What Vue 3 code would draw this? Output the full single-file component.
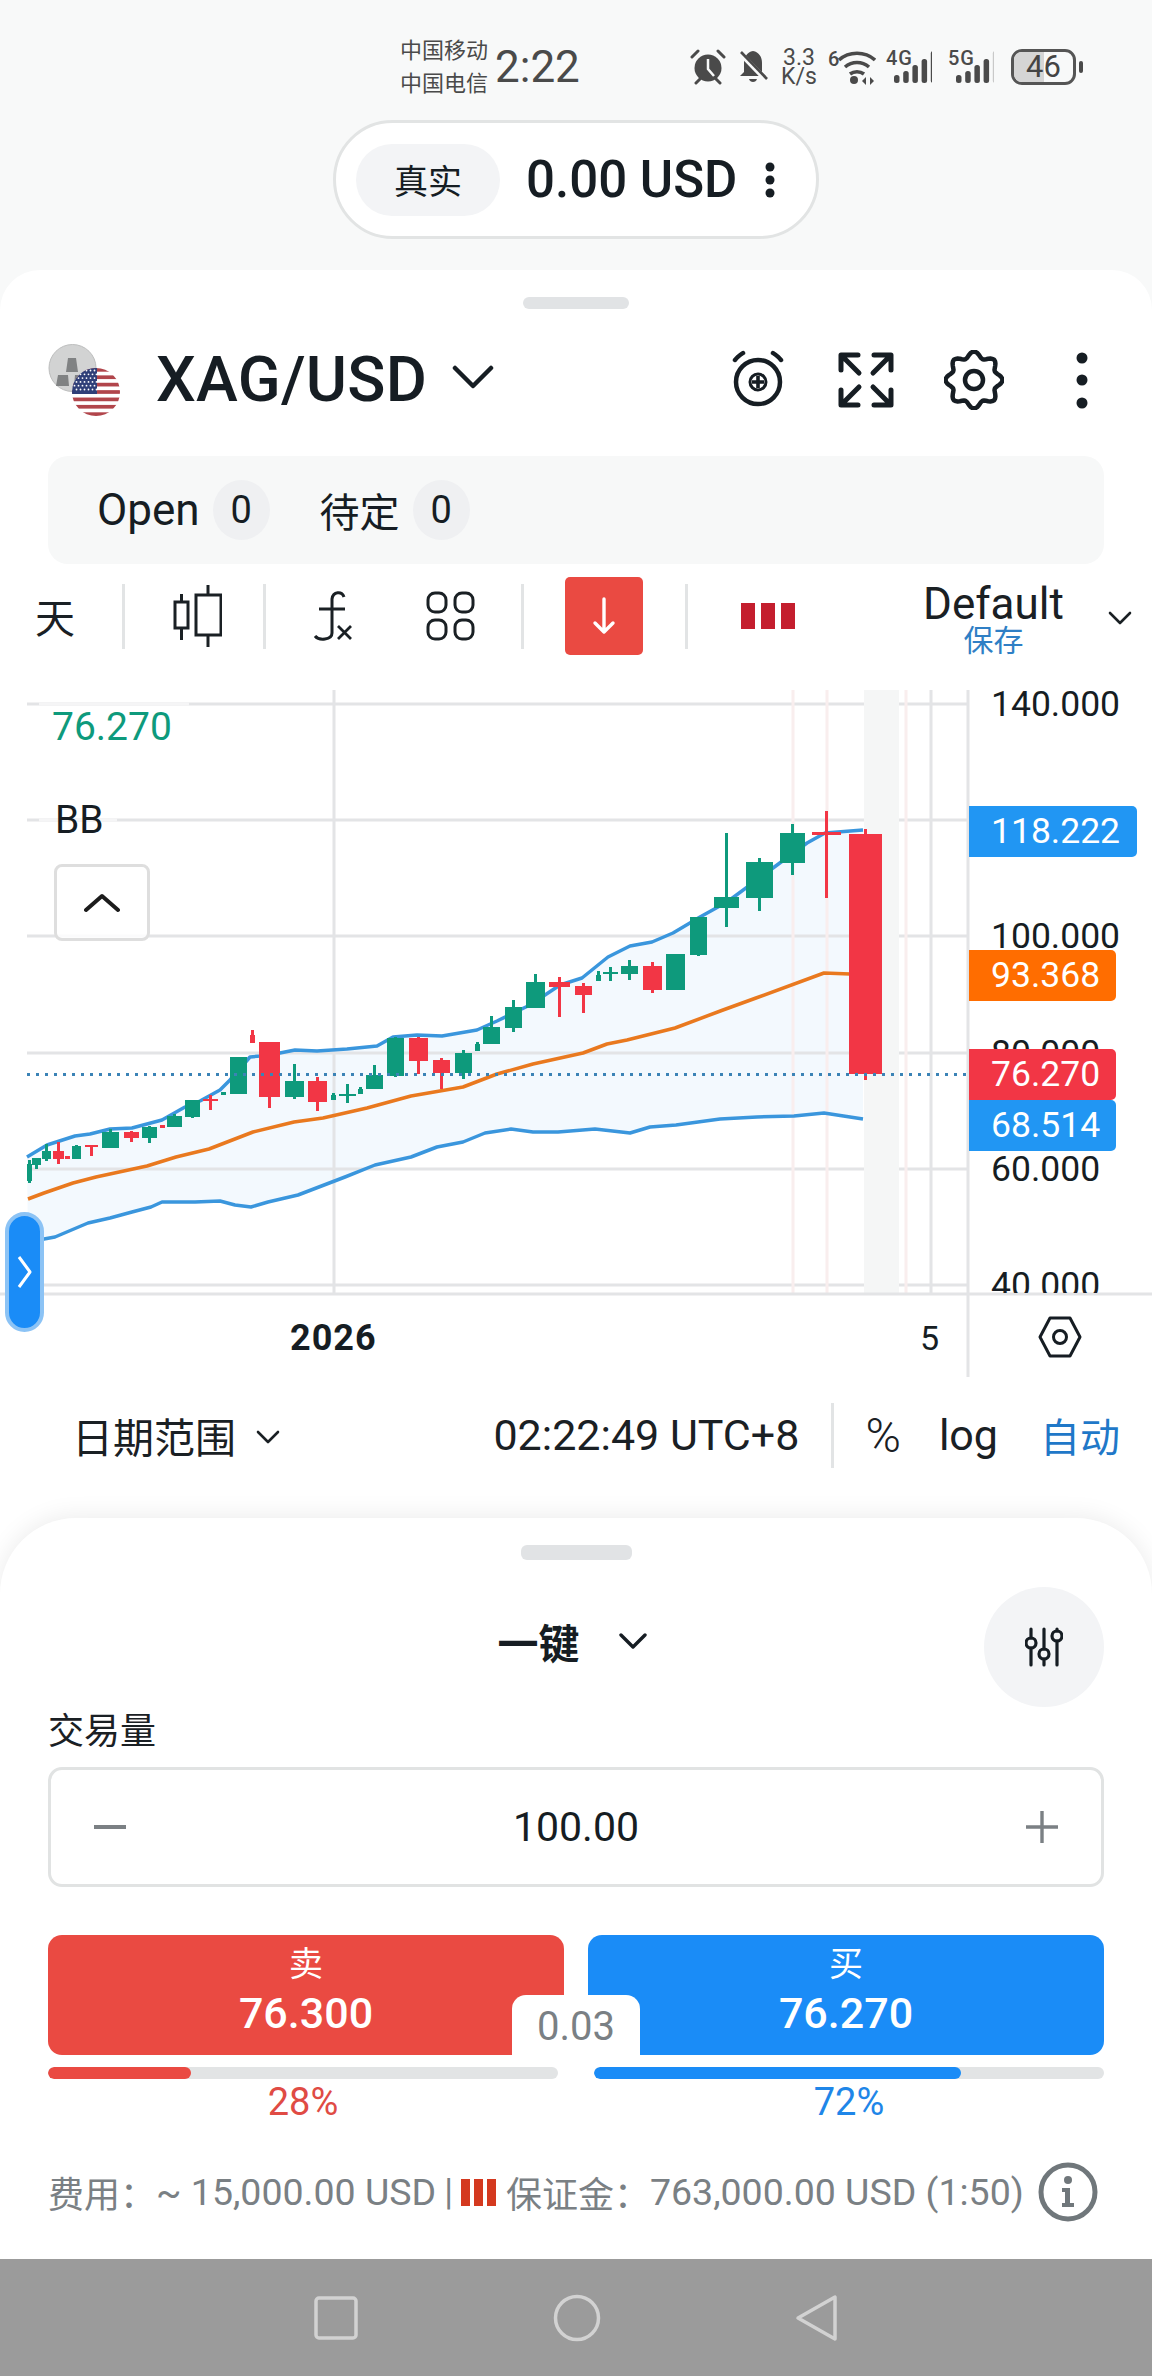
<script setup>
import { computed } from 'vue'

// x0, x1, top, bottom, wickTop, wickBottom, colour
const candles = [
  [27, 32, 1164, 1181, 1160, 1183, 'g'], [32, 41, 1158, 1165, 1158, 1169, 'g'], [42, 51, 1151, 1159, 1144, 1161, 'g'],
  [53, 64, 1151, 1159, 1142, 1164, 'r'], [65, 70, 1156, 1159, 1156, 1159, 'r'], [72, 81, 1146, 1159, 1145, 1159, 'g'],
  [85, 98, 1145, 1147, 1145, 1156, 'r'], [102, 119, 1132, 1148, 1129, 1148, 'g'], [124, 139, 1132, 1138, 1131, 1142, 'r'],
  [142, 157, 1127, 1138, 1126, 1143, 'g'], [160, 165, 1125, 1128, 1125, 1128, 'r'], [167, 182, 1116, 1127, 1114, 1127, 'g'],
  [185, 200, 1100, 1117, 1100, 1118, 'g'], [203, 218, 1099, 1101, 1095, 1110, 'r'], [221, 226, 1092, 1095, 1092, 1095, 'g'],
  [230, 247, 1057, 1094, 1057, 1094, 'g'], [250, 255, 1035, 1043, 1030, 1043, 'r'], [259, 280, 1042, 1097, 1042, 1108, 'r'],
  [285, 304, 1081, 1097, 1064, 1099, 'g'], [308, 327, 1081, 1102, 1077, 1111, 'r'], [331, 336, 1095, 1100, 1093, 1100, 'g'],
  [339, 356, 1094, 1096, 1084, 1103, 'g'], [358, 363, 1089, 1094, 1087, 1094, 'g'], [366, 383, 1075, 1089, 1065, 1089, 'g'],
  [387, 404, 1038, 1076, 1037, 1077, 'g'], [409, 428, 1038, 1061, 1037, 1074, 'r'], [433, 450, 1060, 1073, 1058, 1089, 'r'],
  [455, 472, 1053, 1073, 1050, 1079, 'g'], [475, 480, 1044, 1051, 1042, 1051, 'g'], [483, 500, 1027, 1044, 1016, 1044, 'g'],
  [505, 522, 1007, 1028, 1000, 1032, 'g'], [526, 545, 982, 1008, 974, 1008, 'g'], [549, 570, 982, 987, 977, 1017, 'r'],
  [575, 592, 986, 995, 983, 1013, 'r'], [596, 601, 975, 981, 971, 981, 'g'], [603, 618, 972, 974, 967, 981, 'g'],
  [621, 638, 966, 974, 960, 980, 'g'], [643, 662, 966, 990, 962, 993, 'r'], [666, 685, 954, 990, 954, 990, 'g'],
  [690, 707, 917, 955, 917, 956, 'g'], [714, 739, 897, 908, 833, 927, 'g'], [746, 773, 862, 898, 858, 911, 'g'],
  [780, 805, 833, 863, 824, 875, 'g'], [812, 841, 832, 835, 811, 898, 'r'], [849, 882, 834, 1074, 829, 1080, 'r'],
]

const upper = [[27, 1157], [47, 1145], [75, 1136], [90, 1134], [110, 1129], [132, 1128], [162, 1120], [185, 1107], [200, 1101], [220, 1090], [230, 1080], [250, 1057], [260, 1056], [280, 1053], [295, 1050], [317, 1051], [347, 1049], [377, 1046], [393, 1037], [417, 1035], [442, 1036], [477, 1030], [497, 1021], [530, 1005], [560, 985], [582, 978], [608, 957], [630, 946], [652, 942], [673, 933], [700, 917], [727, 902], [773, 868], [807, 843], [825, 833], [863, 830]]
const middle = [[28, 1199], [44, 1193], [73, 1183], [96, 1177], [147, 1166], [176, 1157], [209, 1149], [253, 1132], [294, 1122], [323, 1118], [367, 1108], [411, 1096], [463, 1087], [497, 1074], [533, 1064], [583, 1053], [607, 1044], [627, 1040], [675, 1028], [723, 1010], [756, 998], [824, 973], [850, 974]]
const lower = [[28, 1247], [44, 1239], [55, 1237], [88, 1223], [110, 1218], [132, 1212], [151, 1207], [162, 1202], [195, 1202], [220, 1201], [235, 1205], [251, 1207], [268, 1202], [298, 1195], [345, 1177], [375, 1165], [411, 1157], [437, 1147], [463, 1142], [485, 1133], [511, 1129], [533, 1132], [558, 1132], [595, 1129], [630, 1133], [650, 1127], [676, 1125], [720, 1119], [757, 1117], [794, 1116], [824, 1113], [863, 1119]]

const toPath = (pts) => 'M' + pts.map((p) => p.join(' ')).join('L')
const upperPath = toPath(upper)
const middlePath = toPath(middle)
const lowerPath = toPath(lower)
const bandPath = upperPath + 'L' + [...lower].reverse().map((p) => p.join(' ')).join('L') + 'Z'

const gridY = [704, 820, 936, 1053, 1169, 1285]
const axisLabels = [
  { y: 704, text: '140.000' }, { y: 821, text: '120.000' }, { y: 936, text: '100.000' },
  { y: 1053, text: '80.000' }, { y: 1169, text: '60.000' }, { y: 1285, text: '40.000' },
]
const priceTags = [
  { y: 806, w: 168, text: '118.222', color: '#2196f3' },
  { y: 950, w: 147, text: '93.368', color: '#ff6d00' },
  { y: 1049, w: 147, text: '76.270', color: '#f23645' },
  { y: 1100, w: 147, text: '68.514', color: '#2196f3' },
]

const flagStripes = Array.from({ length: 7 }, (_, i) => 24 + (i * 48) / 6.5)
const flagDots = []
for (let r = 0; r < 6; r++) {
  for (let c = 0; c < 6; c++) flagDots.push([26.5 + c * 4 + (r % 2) * 2, 26.5 + r * 3.8])
}

// wavy outline, 8 teeth
const gearPath = computed(() => {
  const pts = []
  for (let i = 0; i < 96; i++) {
    const a = (i / 96) * Math.PI * 2
    const r = 25.5 + 3 * Math.cos(a * 8)
    pts.push((30 + r * Math.sin(a)).toFixed(1) + ' ' + (30 - r * Math.cos(a)).toFixed(1))
  }
  return 'M' + pts.join('L') + 'Z'
})
</script>

<template>
  <div class="page">
    <div class="status-bar">
      <div class="carriers">
        <span>中国移动</span>
        <span>中国电信</span>
      </div>
      <div class="clock">2:22</div>
      <svg class="st-alarm" width="36" height="36" viewBox="0 0 36 36">
        <circle cx="18" cy="19" r="13.5" fill="#4a4a4a" />
        <path d="M18 10v10l6 7" fill="none" stroke="#f8f9f9" stroke-width="2.5" />
        <path d="M2 8l6-6M34 8l-6-6M6 34l4-4M30 34l-4-4" stroke="#4a4a4a" stroke-width="3" stroke-linecap="round" />
      </svg>
      <svg class="st-bell" width="30" height="34" viewBox="0 0 30 34">
        <path d="M15 1c6 1 9 6 9 12v9l4 4H2l4-4v-9C6 7 9 2 15 1z" fill="#4a4a4a" />
        <path d="M11 29h8c-1 4-7 4-8 0z" fill="#4a4a4a" />
        <path d="M2 3l27 28" stroke="#f8f9f9" stroke-width="5" />
        <path d="M3 2l26 27" stroke="#4a4a4a" stroke-width="2.6" />
      </svg>
      <div class="st-speed"><span>3.3</span><span>K/s</span></div>
      <span class="st-six">6</span>
      <svg class="st-wifi" width="39" height="36" viewBox="0 0 39 36">
        <path d="M2 11c10-9 26-9 36 0M8 18c7-6 17-6 24 0M13 25c4-3 10-3 14 0" fill="none" stroke="#4a4a4a" stroke-width="3.6" />
        <circle cx="17" cy="31" r="4" fill="#4a4a4a" />
        <path d="M25 32l4-4v8zM33 36v-8l4 4z" fill="#4a4a4a" />
      </svg>
      <div class="st-signal first">
        <span>4G</span>
        <svg width="46" height="36" viewBox="0 0 46 36">
          <rect v-for="(h, i) in [8, 12, 18, 24, 32]" :key="i" :x="8 + i * 9.2" :y="34 - h" width="5.500" :height="h" rx="2.5" fill="#4a4a4a" />
        </svg>
      </div>
      <div class="st-signal second">
        <span>5G</span>
        <svg width="46" height="36" viewBox="0 0 46 36">
          <rect v-for="(h, i) in [8, 12, 18, 24, 32]" :key="i" :x="8 + i * 9.2" :y="34 - h" width="5.500" :height="h" rx="2.5" :fill="i === 4 ? '#c9c9c9' : '#4a4a4a'" />
        </svg>
      </div>
      <div class="battery"><div class="battery-fill"></div><span>46</span></div>
      <div class="battery-cap"></div>
    </div>

    <div class="account-row">
      <div class="account-pill">
        <span class="account-chip">真实</span>
        <span class="account-balance">0.00 USD</span>
        <svg class="account-dots" width="10" height="36" viewBox="0 0 10 36">
          <circle cx="5" cy="5" r="4.5" /><circle cx="5" cy="18" r="4.5" /><circle cx="5" cy="31" r="4.5" />
        </svg>
      </div>
    </div>

    <section class="chart-sheet">
      <div class="handle"></div>
      <header class="symbol-row">
        <svg class="symbol-logo" width="72" height="72" viewBox="0 0 72 72">
          <defs>
            <clipPath id="flag-clip"><circle cx="48" cy="48" r="24" /></clipPath>
          </defs>
          <circle cx="24.5" cy="24" r="23.5" fill="#d2d3d3" stroke="#bcbdbd" />
          <path d="M20 14h8l2 14H18zM10 31h10l1 11H8zM27 31h10l2 11H26z" fill="#808283" />
          <g clip-path="url(#flag-clip)">
            <rect x="24" y="24" width="48" height="48" fill="#fff" />
            <rect v-for="y in flagStripes" :key="y" x="24" :y="y" width="48" height="3.7" fill="#b1454b" />
            <rect x="24" y="24" width="25" height="26" fill="#2f3f78" />
            <circle v-for="(d, i) in flagDots" :key="i" :cx="d[0]" :cy="d[1]" r="0.9" fill="#fff" />
          </g>
        </svg>
        <h1 class="symbol-name">XAG/USD</h1>
        <svg class="symbol-chevron" width="42" height="24" viewBox="0 0 42 24">
          <path d="M3 3l18 18L39 3" fill="none" stroke="#161d23" stroke-width="4.5" stroke-linecap="round" stroke-linejoin="round" />
        </svg>
        <div class="symbol-actions">
          <svg width="60" height="60" viewBox="0 0 60 60" fill="none" stroke="#161d23">
            <circle cx="30" cy="32" r="22" stroke-width="4.500" />
            <circle cx="30" cy="32" r="8" stroke-width="3" />
            <path d="M30 26v12M24 32h12" stroke-width="3.600" />
            <path d="M7 10c2-3 5-5 8-7M53 10c-2-3-5-5-8-7" stroke-width="4.500" stroke-linecap="round" />
          </svg>
          <svg width="60" height="60" viewBox="0 0 60 60" fill="none" stroke="#161d23" stroke-width="5" stroke-linecap="round" stroke-linejoin="round">
            <path d="M5 20V5h17M7 7l16 16M55 20V5H38M53 7L37 23M5 40v15h17M7 53l16-16M55 40v15H38M53 53L37 37" />
          </svg>
          <svg width="60" height="60" viewBox="0 0 60 60" fill="none" stroke="#161d23" stroke-width="4.500">
            <path :d="gearPath" stroke-linejoin="round" />
            <circle cx="30" cy="30" r="9" />
          </svg>
          <svg width="60" height="60" viewBox="0 0 60 60" fill="#161d23">
            <circle cx="30" cy="8" r="5.500" /><circle cx="30" cy="30" r="5.500" /><circle cx="30" cy="53" r="5.500" />
          </svg>
        </div>
      </header>

      <div class="tabs">
        <span>Open</span><span class="tab-badge">0</span>
        <span class="tab-second">待定</span><span class="tab-badge">0</span>
      </div>

      <div class="toolbar">
        <span class="tf">天</span>
        <i class="tb-div d1"></i>
        <svg class="tb-candle" width="50" height="62" viewBox="0 0 50 62" fill="none" stroke="#1a2024" stroke-width="3">
          <rect x="3" y="17" width="13" height="26" />
          <path d="M9.500 9v8M9.500 43v12" />
          <rect x="24" y="10" width="25" height="40" />
          <path d="M36 0v10M36 50v12" />
        </svg>
        <i class="tb-div d2"></i>
        <svg class="tb-fx" width="42" height="52" viewBox="0 0 42 52" fill="none" stroke="#1a2024" stroke-width="3">
          <path d="M31 7c-2-6-11-6-12 2v34c0 7-13 8-17 3" />
          <path d="M6 19h26" />
          <path d="M25 36l13 13M38 36L25 49" stroke-width="2.800" />
        </svg>
        <svg class="tb-grid" width="50" height="50" viewBox="0 0 50 50" fill="none" stroke="#1a2024" stroke-width="3">
          <rect x="2" y="2" width="18" height="19" rx="7" />
          <rect x="29" y="2" width="18" height="19" rx="7" />
          <rect x="2" y="29" width="18" height="19" rx="7" />
          <rect x="29" y="29" width="18" height="19" rx="7" />
        </svg>
        <i class="tb-div d3"></i>
        <div class="tb-sell">
          <svg width="24" height="38" viewBox="0 0 24 38" fill="none" stroke="#fff" stroke-width="3.400" stroke-linecap="round" stroke-linejoin="round">
            <path d="M12 2v33M3 26l9 9 9-9" />
          </svg>
        </div>
        <i class="tb-div d4"></i>
        <div class="tb-bars"><b></b><b></b><b></b></div>
        <div class="tb-template">
          <span>Default</span>
          <span class="tb-save">保存</span>
        </div>
        <svg class="tb-chevron" width="24" height="16" viewBox="0 0 24 16">
          <path d="M2 3l10 10L22 3" fill="none" stroke="#1a2024" stroke-width="2.600" stroke-linecap="round" stroke-linejoin="round" />
        </svg>
      </div>

      <div class="chart">
        <svg class="chart-svg" width="1152" height="700" viewBox="0 680 1152 700">
          <path :d="bandPath" fill="#f3f9fe" />
          <path v-for="y in gridY" :key="y" :d="`M27 ${y}H968`" stroke="#e3e4e6" stroke-width="3" />
          <path d="M39 704H189M39 820H117" stroke="#f5f5f6" stroke-width="3" />
          <path d="M334 690V1294M931 690V1294" stroke="#e3e4e6" stroke-width="3" />
          <path d="M793 690V1294M827 690V1294M906 690V1294" stroke="#f9eeee" stroke-width="3" />
          <rect x="864" y="690" width="35" height="604" fill="#f5f6f6" />
          <path :d="upperPath" fill="none" stroke="#3a96dd" stroke-width="3.500" stroke-linejoin="round" />
          <path :d="lowerPath" fill="none" stroke="#3a96dd" stroke-width="3.500" stroke-linejoin="round" />
          <path :d="middlePath" fill="none" stroke="#e9791f" stroke-width="3.500" stroke-linejoin="round" />
          <g v-for="(c, i) in candles" :key="i" :fill="c[6] === 'g' ? '#0e9a7c' : '#f23645'">
            <rect :x="(c[0] + c[1]) / 2 - 1.5" :y="c[4]" width="3" :height="c[5] - c[4]" />
            <rect :x="c[0]" :y="c[2]" :width="c[1] - c[0]" :height="c[3] - c[2]" />
          </g>
          <path d="M27 1074.500H968" stroke="#3b83b6" stroke-width="3" stroke-dasharray="3 6" />
          <path d="M0 1294H1152" stroke="#e3e4e6" stroke-width="3" />
          <path d="M968 690V1377" stroke="#e3e4e6" stroke-width="3" />
          <path d="M1040 1337l10-19h20l10 19-10 19h-20z" fill="none" stroke="#161d23" stroke-width="3" stroke-linejoin="round" />
          <circle cx="1060" cy="1337" r="6.500" fill="none" stroke="#161d23" stroke-width="3" />
        </svg>

        <div class="axis">
          <span v-for="a in axisLabels" :key="a.text" class="axis-label" :style="{ top: a.y - 700 + 'px' }">{{ a.text }}</span>
        </div>
        <span
          v-for="t in priceTags"
          :key="t.text"
          class="price-tag"
          :style="{ top: t.y - 680 + 'px', width: t.w + 'px', background: t.color }"
        >{{ t.text }}</span>

        <span class="last-price">76.270</span>
        <span class="indicator">BB</span>
        <button class="collapse" type="button">
          <svg width="36" height="20" viewBox="0 0 36 20">
            <path d="M2 17L18 3l16 14" fill="none" stroke="#1c1c1c" stroke-width="4" stroke-linecap="round" stroke-linejoin="round" />
          </svg>
        </button>
        <div class="side-handle">
          <svg width="15" height="32" viewBox="0 0 15 32">
            <path d="M2 1l11 15L2 31" fill="none" stroke="#fff" stroke-width="3" stroke-linejoin="round" />
          </svg>
        </div>
        <span class="year">2026</span>
        <span class="day">5</span>
      </div>

      <div class="range-row">
        <span class="range-label">日期范围</span>
        <svg class="range-chevron" width="24" height="14" viewBox="0 0 24 14">
          <path d="M2 2l10 10L22 2" fill="none" stroke="#1a2024" stroke-width="2.600" stroke-linecap="round" stroke-linejoin="round" />
        </svg>
        <span class="range-time">02:22:49 UTC+8</span>
        <i class="range-div"></i>
        <span class="range-pct">%</span>
        <span class="range-log">log</span>
        <span class="range-auto">自动</span>
      </div>
    </section>

    <section class="trade-sheet">
      <div class="handle trade-handle"></div>
      <div class="mode-row">
        <span></span>
        <div class="mode">
          <span class="mode-name">一键</span>
          <svg width="28" height="16" viewBox="0 0 28 16">
            <path d="M2 2l12 12L26 2" fill="none" stroke="#161d23" stroke-width="3.400" stroke-linecap="round" stroke-linejoin="round" />
          </svg>
        </div>
        <div class="mode-settings">
          <svg width="38" height="40" viewBox="0 0 38 40" fill="none" stroke="#161d23" stroke-width="3.200">
            <path d="M6 2v9M6 21v17M19 2v20M19 32v6M32 2v2M32 14v24" stroke-linecap="round" />
            <circle cx="6" cy="16" r="5" /><circle cx="19" cy="27" r="5" /><circle cx="32" cy="9" r="5" />
          </svg>
        </div>
      </div>

      <div class="volume-label">交易量</div>
      <div class="volume">
        <svg width="32" height="32" viewBox="0 0 32 32"><path d="M0 16h32" stroke="#7b8084" stroke-width="4" /></svg>
        <span class="volume-value">100.00</span>
        <svg width="32" height="32" viewBox="0 0 32 32"><path d="M0 16h32M16 0v32" stroke="#7b8084" stroke-width="3.400" /></svg>
      </div>

      <div class="trade-buttons">
        <button class="trade-btn sell" type="button"><span>卖</span><strong>76.300</strong></button>
        <button class="trade-btn buy" type="button"><span>买</span><strong>76.270</strong></button>
        <span class="spread">0.03</span>
      </div>

      <div class="sentiment">
        <div class="sentiment-col sell-col">
          <div class="track"><div class="fill" :style="{ width: '28%' }"></div></div>
          <span>28%</span>
        </div>
        <div class="sentiment-col buy-col">
          <div class="track"><div class="fill" :style="{ width: '72%' }"></div></div>
          <span>72%</span>
        </div>
      </div>

      <div class="fee-row">
        <span>费用：</span>
        <span class="fee-amount">~ 15,000.00 USD</span>
        <span class="fee-sep">|</span>
        <div class="fee-bars"><b></b><b></b><b></b></div>
        <span class="fee-margin">保证金：</span>
        <span class="fee-value">763,000.00 USD (1:50)</span>
        <svg class="fee-info" width="60" height="60" viewBox="0 0 60 60">
          <circle cx="30" cy="30" r="27" fill="none" stroke="#70777b" stroke-width="5" />
          <circle cx="30" cy="18" r="4" fill="#70777b" />
          <path d="M24 26h8v15h4v4H24v-4h3V30h-3z" fill="#70777b" />
        </svg>
      </div>
    </section>

    <nav class="nav-bar">
      <svg width="46" height="46" viewBox="0 0 46 46"><rect x="3" y="3" width="40" height="40" rx="3" fill="none" stroke="#d2d2d2" stroke-width="3.500" /></svg>
      <svg width="48" height="48" viewBox="0 0 48 48"><circle cx="24" cy="24" r="21.500" fill="none" stroke="#d2d2d2" stroke-width="3.500" /></svg>
      <svg width="44" height="48" viewBox="0 0 44 48"><path d="M40 3v42L3 24z" fill="none" stroke="#d2d2d2" stroke-width="3.500" stroke-linejoin="round" /></svg>
    </nav>
  </div>
</template>

<style scoped>
.page {
  width: 1152px;
  height: 2376px;
  overflow: hidden;
  display: flex;
  flex-direction: column;
  background: #f8f9f9;
  color: #161d23;
  font-family: Roboto, "Noto Sans CJK SC", sans-serif;
}

.status-bar {
  height: 120px;
  flex: none;
  display: flex;
  align-items: center;
  padding: 14px 0 0 400px;
  box-sizing: border-box;
  color: #4a4a4a;
}

.carriers {
  width: 95px;
  display: flex;
  flex-direction: column;
  gap: 11px;
  font-size: 22px;
  line-height: 22px;
}

.clock {
  width: 83px;
  font-size: 44px;
  line-height: 50px;
}

.st-alarm {
  margin-left: 112px;
}

.st-bell {
  margin-left: 12px;
}

.st-speed {
  margin-left: 13px;
  width: 36px;
  display: flex;
  flex-direction: column;
  align-items: center;
  font-size: 23px;
  line-height: 19px;
}

.st-six {
  margin: -16px 0 0 11px;
  font-size: 20px;
  font-weight: 500;
  width: 9px;
}

.st-signal {
  position: relative;
  width: 46px;
  height: 36px;
}

.st-signal span {
  position: absolute;
  left: 0;
  top: -1px;
  font-size: 20px;
  line-height: 20px;
  font-weight: 500;
  letter-spacing: 1px;
}

.st-signal.first {
  margin-left: 10px;
}

.st-signal.second {
  margin-left: 16px;
}

.battery {
  position: relative;
  margin-left: 17px;
  width: 65px;
  height: 36px;
  box-sizing: border-box;
  border: 3px solid #555;
  border-radius: 11px;
  overflow: hidden;
  display: flex;
  align-items: center;
  justify-content: center;
}

.battery-fill {
  position: absolute;
  left: 0;
  top: 0;
  bottom: 0;
  width: 30px;
  background: #d5d5d5;
}

.battery span {
  position: relative;
  font-size: 31px;
  line-height: 30px;
  color: #444;
}

.battery-cap {
  margin-left: 3px;
  width: 4px;
  height: 12px;
  border-radius: 2px;
  background: #4a4a4a;
}

.account-row {
  height: 119px;
  flex: none;
  margin-bottom: 31px;
  display: flex;
  justify-content: center;
}

.account-pill {
  width: 486px;
  height: 119px;
  box-sizing: border-box;
  display: flex;
  align-items: center;
  padding-left: 20px;
  background: #fff;
  border: 3px solid #e2e4e4;
  border-radius: 60px;
}

.account-chip {
  width: 144px;
  height: 72px;
  border-radius: 36px;
  background: #f3f4f6;
  display: flex;
  align-items: center;
  justify-content: center;
  font-size: 34px;
}

.account-balance {
  margin-left: 26px;
  font-size: 51px;
  font-weight: 500;
}

.account-dots {
  margin-left: 28px;
  fill: #161d23;
}

.chart-sheet {
  height: 1328px;
  margin-bottom: -80px;
  flex: none;
  background: #fff;
  border-radius: 40px 40px 0 0;
  display: flex;
  flex-direction: column;
}

.handle {
  flex: none;
  width: 106px;
  height: 12px;
  margin: 27px auto 0;
  background: #e1e3e5;
  border-radius: 6px;
}

.symbol-row {
  flex: none;
  height: 100px;
  margin-top: 21px;
  padding: 0 40px 0 48px;
  display: flex;
  align-items: center;
}

.symbol-logo {
  flex: none;
}

.symbol-name {
  margin: 0 0 0 36px;
  font-size: 63px;
  line-height: 70px;
  font-weight: 500;
  letter-spacing: 0.3px;
}

.symbol-chevron {
  margin-left: 25px;
  margin-top: -6px;
}

.symbol-actions {
  margin-left: auto;
  display: flex;
  gap: 48px;
}

.tabs {
  flex: none;
  height: 108px;
  margin: 26px 48px 0;
  padding-left: 49px;
  display: flex;
  align-items: center;
  background: #f7f8f8;
  border-radius: 20px;
  font-size: 44px;
}

.tab-badge {
  width: 57px;
  height: 60px;
  margin-left: 13px;
  border-radius: 50%;
  background: #eff0f2;
  display: flex;
  align-items: center;
  justify-content: center;
  font-size: 38px;
}

.tab-second {
  margin-left: 50px;
  font-size: 40px;
}

.toolbar {
  flex: none;
  height: 78px;
  margin-top: 13px;
  display: flex;
  align-items: center;
  color: #1a2024;
}

.tf {
  margin-left: 35px;
  width: 40px;
  font-size: 40px;
}

.tb-div {
  width: 3px;
  height: 65px;
  background: #e2e4e5;
}

.d1 {
  margin-left: 47px;
}

.d2 {
  margin-left: 41px;
}

.d3 {
  margin-left: 45px;
}

.d4 {
  margin-left: 42px;
}

.tb-candle {
  margin-left: 47px;
}

.tb-fx {
  margin-left: 47px;
}

.tb-grid {
  margin-left: 71px;
}

.tb-sell {
  margin-left: 41px;
  width: 78px;
  height: 78px;
  border-radius: 5px;
  background: #ea4a42;
  display: flex;
  align-items: center;
  justify-content: center;
}

.tb-bars {
  margin-left: 53px;
  display: flex;
  gap: 6px;
}

.tb-bars b {
  width: 14px;
  height: 26px;
  background: #c41e2e;
}

.tb-template {
  margin-left: 129px;
  width: 139px;
  display: flex;
  flex-direction: column;
  align-items: center;
  font-size: 44px;
  line-height: 46px;
  padding-top: 4px;
}

.tb-save {
  font-size: 30px;
  line-height: 28px;
  color: #2f7fc5;
}

.tb-chevron {
  margin-left: 45px;
  margin-top: 4px;
}

.chart {
  position: relative;
  flex: none;
  height: 700px;
  margin-top: 25px;
}

.chart-svg {
  display: block;
}

.axis {
  position: absolute;
  left: 968px;
  top: 0;
  width: 184px;
  height: 613px;
  overflow: hidden;
}

.axis-label {
  position: absolute;
  left: 23px;
  font-size: 35.5px;
  line-height: 40px;
  color: #161d23;
}

.price-tag {
  position: absolute;
  left: 969px;
  height: 51px;
  padding-left: 22px;
  box-sizing: border-box;
  border-radius: 0 5px 5px 0;
  color: #fff;
  font-size: 35.5px;
  line-height: 51px;
}

.last-price {
  position: absolute;
  left: 52px;
  top: 24px;
  font-size: 39px;
  line-height: 46px;
  color: #0e9a7c;
}

.indicator {
  position: absolute;
  left: 55px;
  top: 117px;
  font-size: 39px;
  line-height: 46px;
}

.collapse {
  position: absolute;
  left: 54px;
  top: 184px;
  width: 96px;
  height: 77px;
  padding: 0;
  box-sizing: border-box;
  background: rgba(255, 255, 255, 0.85);
  border: 3px solid #dedede;
  border-radius: 8px;
  display: flex;
  align-items: center;
  justify-content: center;
}

.side-handle {
  position: absolute;
  left: 5px;
  top: 532px;
  width: 39px;
  height: 120px;
  box-sizing: border-box;
  background: #1a8cf7;
  border: 4px solid #8cc3f5;
  border-radius: 20px;
  display: flex;
  align-items: center;
  justify-content: center;
}

.year {
  position: absolute;
  left: 290px;
  top: 637px;
  font-size: 36px;
  line-height: 42px;
  font-weight: 700;
  letter-spacing: 1px;
}

.day {
  position: absolute;
  left: 920px;
  top: 637px;
  font-size: 34px;
  line-height: 42px;
}

.range-row {
  flex: none;
  height: 72px;
  margin-top: 19px;
  padding: 0 32px 0 72px;
  display: flex;
  align-items: center;
  color: #1a2024;
}

.range-label {
  font-size: 41px;
}

.range-chevron {
  margin-left: 20px;
  margin-top: 4px;
}

.range-time {
  margin-left: auto;
  font-size: 43px;
}

.range-div {
  width: 3px;
  height: 65px;
  margin-left: 32px;
  background: #e2e4e5;
}

.range-pct {
  margin-left: 31px;
  font-size: 48px;
  font-weight: 300;
}

.range-log {
  margin-left: 38px;
  font-size: 43px;
}

.range-auto {
  margin-left: 42px;
  font-size: 40px;
  color: #1f78c8;
}

.trade-sheet {
  height: 741px;
  flex: none;
  position: relative;
  background: #fff;
  border-radius: 76px 76px 0 0;
  box-shadow: 0 -2px 24px rgba(0, 0, 0, 0.08);
  padding: 0 48px;
  box-sizing: border-box;
}

.trade-handle {
  width: 111px;
  height: 15px;
}

.mode-row {
  height: 120px;
  margin-top: 27px;
  display: grid;
  grid-template-columns: 1fr auto 1fr;
  align-items: center;
}

.mode {
  display: flex;
  align-items: center;
  gap: 39px;
  margin: -12px 8px 0 0;
}

.mode-name {
  font-size: 41px;
  font-weight: 700;
}

.mode-settings {
  justify-self: end;
  width: 120px;
  height: 120px;
  border-radius: 50%;
  background: #f3f4f6;
  display: flex;
  align-items: center;
  justify-content: center;
}

.volume-label {
  margin-top: 4px;
  font-size: 36px;
  line-height: 42px;
  color: #1a2024;
}

.volume {
  height: 120px;
  margin-top: 14px;
  padding: 0 43px;
  box-sizing: border-box;
  border: 3px solid #e1e3e3;
  border-radius: 14px;
  display: flex;
  align-items: center;
  justify-content: space-between;
}

.volume-value {
  font-size: 41px;
}

.trade-buttons {
  position: relative;
  margin-top: 48px;
  display: flex;
  gap: 24px;
}

.trade-btn {
  flex: 1;
  height: 120px;
  padding: 6px 0 0;
  border: 0;
  border-radius: 14px;
  color: #fff;
  font-family: inherit;
  display: flex;
  flex-direction: column;
  align-items: center;
}

.trade-btn span {
  font-size: 34px;
  line-height: 46px;
}

.trade-btn strong {
  font-size: 43px;
  line-height: 52px;
  font-weight: 500;
}

.sell {
  background: #ea4a42;
}

.buy {
  background: #1a8cf7;
}

.spread {
  position: absolute;
  left: 464px;
  top: 60px;
  width: 128px;
  height: 60px;
  background: #fff;
  border-radius: 14px 14px 0 0;
  color: #7a8084;
  font-size: 40px;
  line-height: 64px;
  text-align: center;
}

.sentiment {
  margin-top: 12px;
  display: flex;
  justify-content: space-between;
}

.sentiment-col {
  width: 510px;
  display: flex;
  flex-direction: column;
  align-items: center;
  font-size: 38px;
  line-height: 40px;
}

.sentiment-col span {
  margin-top: 3px;
}

.track {
  width: 100%;
  height: 12px;
  border-radius: 6px;
  background: #e2e4e5;
  overflow: hidden;
}

.fill {
  height: 100%;
  border-radius: 6px;
}

.sell-col {
  color: #e04b44;
}

.sell-col .fill {
  background: #ea4a42;
}

.buy-col {
  color: #1f86e8;
}

.buy-col .fill {
  background: #1a8cf7;
}

.fee-row {
  height: 60px;
  margin-top: 40px;
  display: flex;
  align-items: center;
  color: #7a8084;
  font-size: 36px;
  white-space: nowrap;
}

.fee-amount {
  font-size: 37.5px;
}

.fee-sep {
  margin-left: 8px;
}

.fee-bars {
  margin-left: 8px;
  display: flex;
  gap: 4px;
}

.fee-bars b {
  width: 9px;
  height: 27px;
  background: #d4391f;
}

.fee-margin {
  margin-left: 10px;
}

.fee-value {
  font-size: 37.5px;
}

.fee-info {
  margin-left: auto;
  margin-right: 6px;
}

.nav-bar {
  flex: 1;
  position: relative;
  background: #9b9b9b;
  display: flex;
  align-items: center;
  justify-content: center;
  gap: 194px;
}
</style>

<style>
html,
body {
  margin: 0;
  background: #f8f9f9;
}
</style>
